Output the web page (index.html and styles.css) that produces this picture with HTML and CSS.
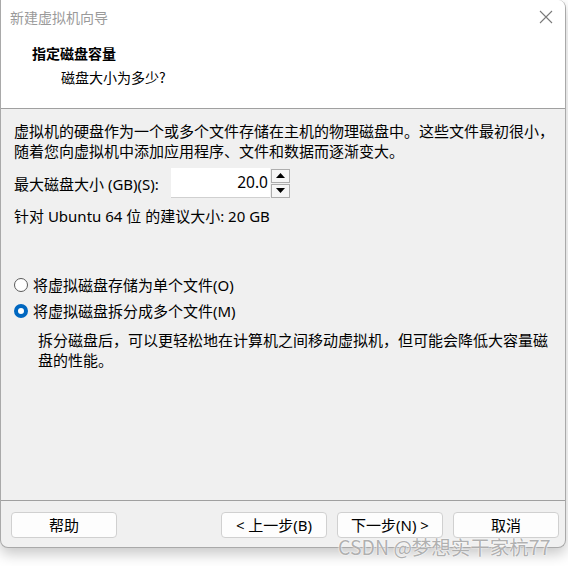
FILE: index.html
```html
<!DOCTYPE html>
<html>
<head>
<meta charset="utf-8">
<link rel="stylesheet" href="styles.css">
</head>
<body>
<div class="window">
  <div class="titlebar">
    <span class="title">新建虚拟机向导</span>
    <svg class="close" width="14" height="14" viewBox="0 0 14 14"><path d="M1 1 L13 13 M13 1 L1 13" stroke="#7a7a7a" stroke-width="1.1" fill="none"/></svg>
  </div>
  <div class="header">
    <div class="h-title">指定磁盘容量</div>
    <div class="h-sub">磁盘大小为多少?</div>
  </div>
  <div class="body">
    <p class="para">虚拟机的硬盘作为一个或多个文件存储在主机的物理磁盘中。这些文件最初很小，<br>随着您向虚拟机中添加应用程序、文件和数据而逐渐变大。</p>
    <div class="size-row">
      <span class="label">最大磁盘大小 (GB)(S):</span>
      <div class="input">20.0</div>
      <div class="spin">
        <div class="spin-btn"><svg width="9" height="5" viewBox="0 0 9 5"><path d="M0 5 L4.5 0 L9 5 Z" fill="#000"/></svg></div>
        <div class="spin-btn"><svg width="9" height="5" viewBox="0 0 9 5"><path d="M0 0 L4.5 5 L9 0 Z" fill="#000"/></svg></div>
      </div>
    </div>
    <p class="suggest">针对 Ubuntu 64 位 的建议大小: 20 GB</p>
    <div class="radios">
      <div class="radio"><span class="dot"></span><span>将虚拟磁盘存储为单个文件(O)</span></div>
      <div class="radio"><span class="dot on"></span><span>将虚拟磁盘拆分成多个文件(M)</span></div>
    </div>
    <p class="desc">拆分磁盘后，可以更轻松地在计算机之间移动虚拟机，但可能会降低大容量磁<br>盘的性能。</p>
  </div>
  <div class="footer">
    <button class="btn">帮助</button>
    <div class="spacer"></div>
    <button class="btn">&lt; 上一步(B)</button>
    <button class="btn">下一步(N) &gt;</button>
    <button class="btn">取消</button>
  </div>
</div>
<div class="watermark">CSDN @梦想实干家杭77</div>
</body>
</html>
```

FILE: styles.css
```css
* { box-sizing: border-box; }
html, body { margin: 0; padding: 0; }
body {
  width: 568px;
  height: 566px;
  background: #ffffff;
  position: relative;
  overflow: hidden;
  font-family: "Noto Sans", "Noto Sans CJK SC", sans-serif;
  font-size: 15px;
  color: #000;
}
.window {
  width: 566px;
  height: 548px;
  border: 1px solid #a9a9a9;
  border-top: none;
  border-radius: 0 8px 8px 8px;
  background: #f0f0f0;
  display: flex;
  flex-direction: column;
  overflow: hidden;
  box-shadow: 0 6px 14px rgba(0, 0, 0, 0.22);
}
.titlebar {
  height: 34px;
  background: #fff;
  display: flex;
  align-items: center;
  justify-content: space-between;
  padding: 0 12px 0 9px;
}
.title {
  font-family: "Noto Sans CJK SC", sans-serif;
  font-size: 14px;
  color: #9a9a9a;
  line-height: 34px;
}
.close { display: block; margin-top: -1px; }
.header {
  height: 75px;
  background: #fff;
  border-bottom: 1px solid #a0a0a0;
  padding: 7px 0 0 31px;
  font-family: "Noto Sans CJK SC", sans-serif;
  font-size: 14px;
}
.h-title { font-weight: bold; line-height: 24px; }
.h-sub { line-height: 24px; padding-left: 29px; }
.body {
  flex: 1;
  padding: 12px 0 0 13px;
}
.para { margin: 0; line-height: 20px; }
.size-row {
  margin-top: 7px;
  height: 30px;
  display: flex;
  align-items: center;
}
.label { width: 157px; }
.input {
  width: 99px;
  height: 30px;
  background: #fff;
  border-bottom: 1px solid #d0d0d0;
  text-align: right;
  line-height: 29px;
  padding-right: 2px;
  font-size: 15.5px;
}
.spin {
  margin-left: 1px;
  width: 19px;
  height: 29px;
  display: flex;
  flex-direction: column;
  gap: 1px;
}
.spin-btn {
  flex: 1;
  border: 1px solid #adadad;
  background: #f6f6f6;
  display: flex;
  align-items: center;
  justify-content: center;
}
.spin-btn svg { display: block; }
.suggest { margin: 8px 0 0; line-height: 20px; }
.radios {
  margin-top: 49px;
  display: flex;
  flex-direction: column;
  gap: 6px;
}
.radio {
  display: flex;
  align-items: center;
  line-height: 20px;
  gap: 5px;
}
.dot {
  width: 14px;
  height: 14px;
  border-radius: 50%;
  border: 1px solid #5a5a5a;
  background: #fff;
  flex: none;
}
.dot.on {
  border: 4px solid #0067c0;
  background: #fff;
}
.desc {
  margin: 9px 0 0 24px;
  line-height: 20px;
}
.footer {
  height: 47px;
  border-top: 1px solid #a0a0a0;
  display: flex;
  align-items: flex-start;
  padding: 11px 6px 0 10px;
  gap: 10px;
}
.spacer { flex: 1; }
.btn {
  width: 106px;
  height: 26px;
  border: 1px solid #d0d0d0;
  border-radius: 4px;
  background: #fdfdfd;
  font-family: "Noto Sans", "Noto Sans CJK SC", sans-serif;
  font-size: 15px;
  color: #000;
  padding: 0;
  line-height: 24px;
}
.watermark {
  position: absolute;
  left: 338px;
  top: 535px;
  font-family: "Noto Sans CJK SC", sans-serif;
  font-size: 19.5px;
  line-height: 24px;
  color: rgba(150, 150, 150, 0.75);
  text-shadow: 0 0 1px #fff, 0 0 2px #fff;
  white-space: nowrap;
}
```
